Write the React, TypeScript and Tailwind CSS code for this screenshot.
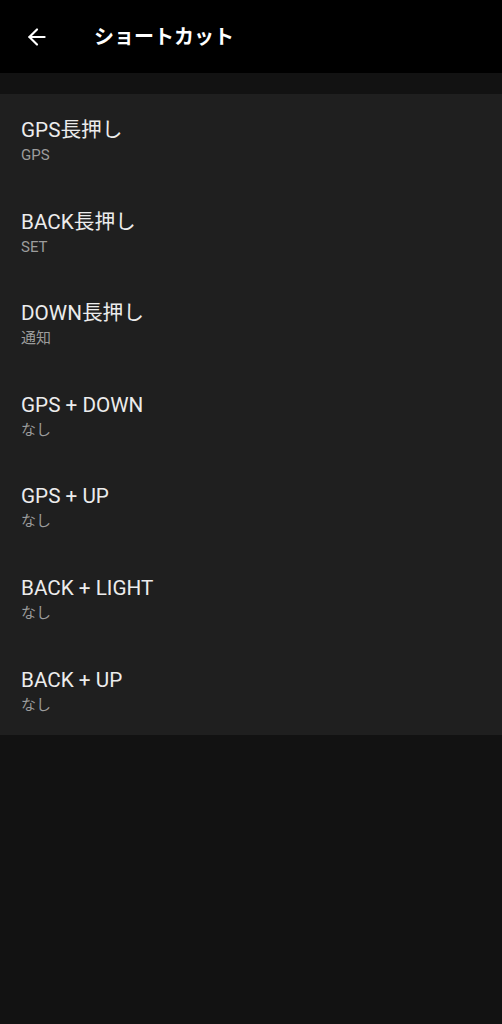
import { ArrowLeft } from "lucide-react";

const items = [
  { title: "GPS長押し", sub: "GPS" },
  { title: "BACK長押し", sub: "SET" },
  { title: "DOWN長押し", sub: "通知" },
  { title: "GPS + DOWN", sub: "なし" },
  { title: "GPS + UP", sub: "なし" },
  { title: "BACK + LIGHT", sub: "なし" },
  { title: "BACK + UP", sub: "なし" },
];

export default function App() {
  return (
    <div
      className="min-h-[1024px] w-full bg-[#121212]"
      style={{ fontFamily: 'Roboto, "Noto Sans CJK JP", sans-serif' }}
    >
      <header className="flex h-[73px] items-center bg-black">
        <ArrowLeft className="ml-[24px] h-[26px] w-[26px] text-white" strokeWidth={2} />
        <h1 className="ml-[44px] text-[20px] font-bold text-white">ショートカット</h1>
      </header>
      <div className="h-[21px]" />
      <ul className="bg-[#1f1f1f]">
        {items.map((it) => (
          <li key={it.title} className="h-[91.6px] pl-[21px] pt-[23px]">
            <div className="text-[20.7px] leading-[26px] text-[#ececec]">{it.title}</div>
            <div className="mt-[2px] text-[15px] leading-[20px] text-[#9c9c9c]">{it.sub}</div>
          </li>
        ))}
      </ul>
    </div>
  );
}
